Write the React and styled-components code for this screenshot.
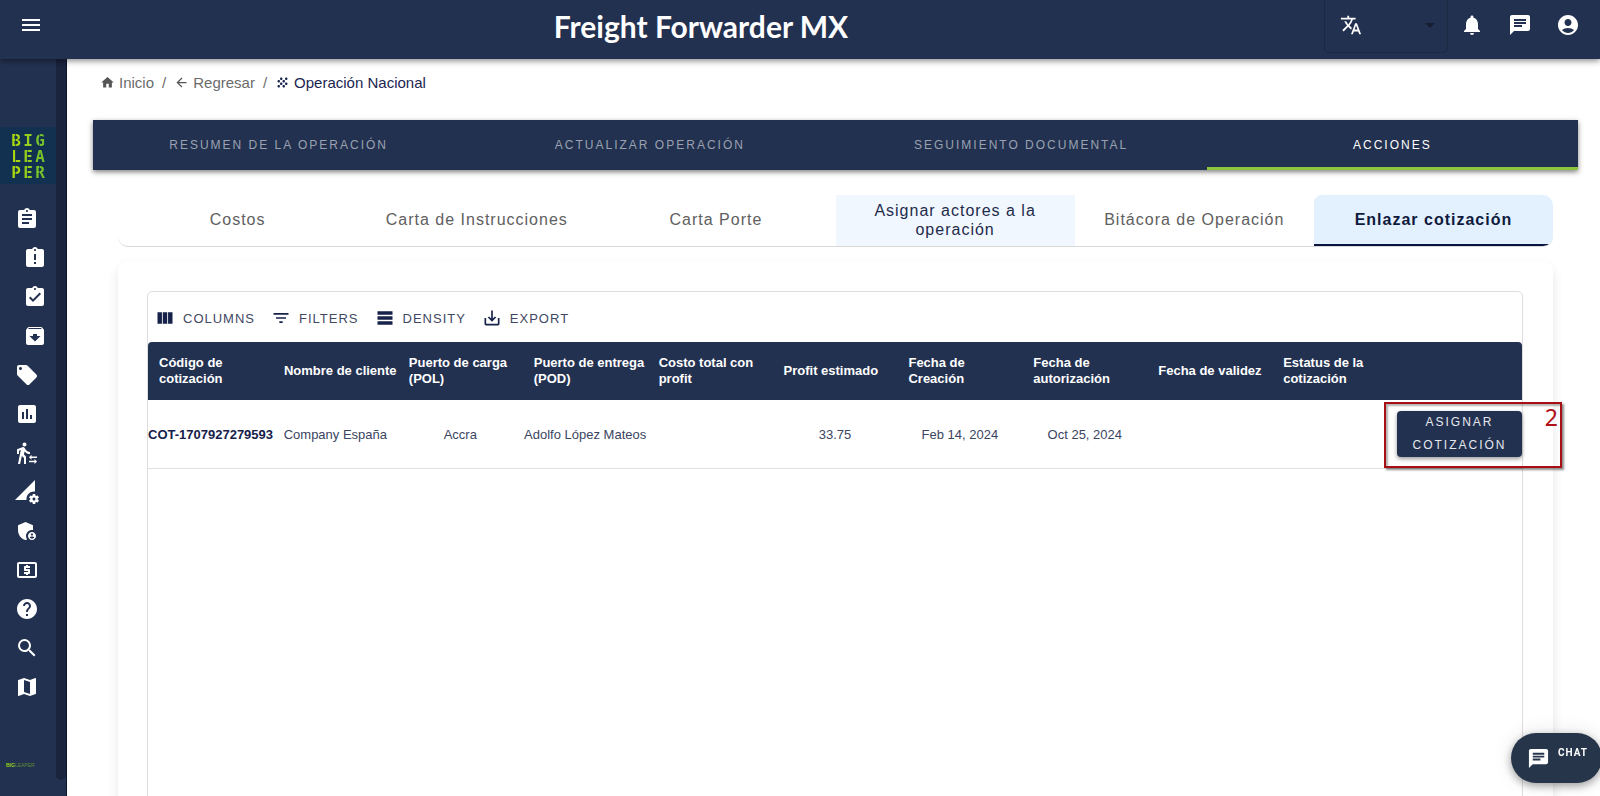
import styled, { createGlobalStyle, css } from "styled-components";
import {
  MdAccountCircle,
  MdAdminPanelSettings,
  MdArchive,
  MdArrowBack,
  MdArrowDropDown,
  MdAssessment,
  MdAssignment,
  MdAssignmentLate,
  MdAssignmentTurnedIn,
  MdChat,
  MdFilterList,
  MdGrain,
  MdHelp,
  MdHome,
  MdLocalAtm,
  MdLocalOffer,
  MdMap,
  MdMenu,
  MdNotifications,
  MdPermDataSetting,
  MdSaveAlt,
  MdSearch,
  MdTableRows,
  MdTransferWithinAStation,
  MdTranslate,
  MdViewColumn,
} from "react-icons/md";

const navy = "#233150";
const green = "#8cc63f";
const logoColors = ["#a9d80f", "#93cf1c", "#76c32b"];

const sideItems = [
  { label: "Operaciones", icon: MdAssignment },
  { label: "Pendientes", icon: MdAssignmentLate, nested: true },
  { label: "Completadas", icon: MdAssignmentTurnedIn, nested: true },
  { label: "Archivadas", icon: MdArchive, nested: true },
  { label: "Ofertas", icon: MdLocalOffer },
  { label: "Reportes", icon: MdAssessment },
  { label: "Traslados", icon: MdTransferWithinAStation },
  { label: "Datos", icon: MdPermDataSetting },
  { label: "Administración", icon: MdAdminPanelSettings },
  { label: "Pagos", icon: MdLocalAtm },
  { label: "Ayuda", icon: MdHelp },
  { label: "Buscar", icon: MdSearch },
  { label: "Mapa", icon: MdMap },
];

const tabs = [
  "Resumen de la operación",
  "Actualizar operación",
  "Seguimiento documental",
  "Acciones",
];

const subTabs = [
  "Costos",
  "Carta de Instrucciones",
  "Carta Porte",
  "Asignar actores a la operación",
  "Bitácora de Operación",
  "Enlazar cotización",
];

const tools = [
  { label: "Columns", icon: MdViewColumn },
  { label: "Filters", icon: MdFilterList },
  { label: "Density", icon: MdTableRows },
  { label: "Export", icon: MdSaveAlt },
];

const columns = [
  "Código de cotización",
  "Nombre de cliente",
  "Puerto de carga (POL)",
  "Puerto de entrega (POD)",
  "Costo total con profit",
  "Profit estimado",
  "Fecha de Creación",
  "Fecha de autorización",
  "Fecha de validez",
  "Estatus de la cotización",
];

const rows = [
  [
    "COT-1707927279593",
    "Company España",
    "Accra",
    "Adolfo López Mateos",
    "",
    "33.75",
    "Feb 14, 2024",
    "Oct 25, 2024",
    "",
    "",
  ],
];

export default function App() {
  return (
    <Page>
      <GlobalStyle />
      <Header>
        <MenuButton aria-label="Menú">
          <MdMenu />
        </MenuButton>
        <Title>Freight Forwarder MX</Title>
        <Language>
          <MdTranslate />
          <LanguageSelect aria-label="Idioma" defaultValue="">
            <option value=""></option>
            <option value="es">Español</option>
            <option value="en">English</option>
          </LanguageSelect>
          <MdArrowDropDown />
        </Language>
        <HeaderButtons>
          <HeaderButton aria-label="Notificaciones">
            <MdNotifications />
          </HeaderButton>
          <HeaderButton aria-label="Mensajes">
            <MdChat />
          </HeaderButton>
          <HeaderButton aria-label="Cuenta">
            <MdAccountCircle />
          </HeaderButton>
        </HeaderButtons>
      </Header>

      <Body>
        <Sidebar>
          <SideContent>
            <Logo href="#">
              {"BIGLEAPER".split("").map((letter, i) => (
                <Letter
                  key={i}
                  $color={logoColors[i % 3]}
                  $solid={letter === "I" || letter === "A"}
                >
                  {letter}
                </Letter>
              ))}
            </Logo>
            <SideNav>
              {sideItems.map(({ label, icon: Icon, nested }) => (
                <SideLink key={label} href="#" aria-label={label} $nested={nested}>
                  <Icon />
                </SideLink>
              ))}
            </SideNav>
            <Brand>
              <b>BIG</b>LEAPER
            </Brand>
          </SideContent>
          <ScrollTrack>
            <ScrollThumb />
          </ScrollTrack>
        </Sidebar>

        <Main>
          <Breadcrumbs aria-label="breadcrumb">
            <Crumb href="#">
              <MdHome />
              Inicio
            </Crumb>
            <span>/</span>
            <Crumb href="#">
              <MdArrowBack />
              Regresar
            </Crumb>
            <span>/</span>
            <Crumb href="#" $current>
              <MdGrain />
              Operación Nacional
            </Crumb>
          </Breadcrumbs>

          <Tabs role="tablist">
            {tabs.map((tab) => (
              <Tab
                key={tab}
                role="tab"
                aria-selected={tab === "Acciones"}
                $active={tab === "Acciones"}
              >
                {tab}
              </Tab>
            ))}
          </Tabs>

          <Panel>
            <SubTabs role="tablist">
              {subTabs.map((tab, i) => (
                <SubTab
                  key={tab}
                  role="tab"
                  aria-selected={i === 5}
                  $active={i === 5}
                  $hovered={i === 3}
                >
                  {tab}
                </SubTab>
              ))}
            </SubTabs>

            <Card>
              <Grid>
                <Toolbar>
                  {tools.map(({ label, icon: Icon }) => (
                    <ToolButton key={label}>
                      <Icon />
                      {label}
                    </ToolButton>
                  ))}
                </Toolbar>
                <Table>
                  <thead>
                    <tr>
                      {columns.map((column) => (
                        <Th key={column}>{column}</Th>
                      ))}
                      <Th aria-label="Acciones" />
                    </tr>
                  </thead>
                  <tbody>
                    {rows.map((row) => (
                      <tr key={row[0]}>
                        {row.map((value, i) => (
                          <Td key={i} $bold={i === 0}>
                            {value}
                          </Td>
                        ))}
                        <Td>
                          <AssignButton>Asignar cotización</AssignButton>
                          <Callout>2</Callout>
                        </Td>
                      </tr>
                    ))}
                  </tbody>
                </Table>
              </Grid>
            </Card>
          </Panel>
        </Main>
      </Body>

      <ChatButton>
        <MdChat />
        <ChatLabel>Chat</ChatLabel>
      </ChatButton>
    </Page>
  );
}

const GlobalStyle = createGlobalStyle`
  * {
    box-sizing: border-box;
  }
  body {
    margin: 0;
    background: #fff;
    font-family: "Liberation Sans", Arial, sans-serif;
  }
  button, select {
    font-family: inherit;
    border: 0;
    background: none;
    padding: 0;
    cursor: pointer;
  }
  a {
    text-decoration: none;
  }
`;

const Page = styled.div`
  height: 100vh;
  display: flex;
  flex-direction: column;
  overflow: hidden;
`;

const Header = styled.header`
  display: flex;
  align-items: flex-start;
  flex-shrink: 0;
  height: 59px;
  padding-right: 8px;
  background: ${navy};
  color: #fff;
  box-shadow: 0 2px 6px rgba(0, 0, 0, 0.45);
  z-index: 2;
`;

const MenuButton = styled.button`
  display: flex;
  align-items: center;
  width: 78px;
  height: 50px;
  padding-left: 19px;
  color: #fff;
  font-size: 24px;
`;

const Title = styled.h1`
  flex: 1;
  margin: 0;
  font-family: Lato, sans-serif;
  font-size: 30px;
  font-weight: 700;
  line-height: 52px;
  text-align: center;
`;

const Language = styled.label`
  display: flex;
  align-items: center;
  width: 124px;
  height: 53px;
  padding: 0 5px 2px 15px;
  border: 1px solid #1d2943;
  border-top: 0;
  border-radius: 0 0 5px 5px;
  font-size: 22px;

  svg:last-child {
    color: #151d30;
    font-size: 24px;
    pointer-events: none;
  }
`;

const LanguageSelect = styled.select`
  flex: 1;
  min-width: 0;
  height: 40px;
  appearance: none;
  color: #fff;
  outline: 0;
`;

const HeaderButtons = styled.div`
  display: flex;
`;

const HeaderButton = styled.button`
  display: flex;
  align-items: center;
  justify-content: center;
  width: 48px;
  height: 50px;
  color: #fff;
  font-size: 24px;
`;

const Body = styled.div`
  display: flex;
  flex: 1;
  min-height: 0;
`;

const Sidebar = styled.aside`
  display: flex;
  flex-shrink: 0;
  width: 67px;
  background: ${navy};
  border-right: 1px solid #0a1230;
`;

const SideContent = styled.div`
  display: flex;
  flex-direction: column;
  flex: 1;
  padding-top: 68px;
`;

const Logo = styled.a`
  display: grid;
  grid-template-columns: repeat(3, 12px);
  grid-auto-rows: 16px;
  justify-content: center;
  align-content: center;
  height: 57px;
  padding-top: 2px;
  background: #123050;
`;

/* stencil lettering: a dim gap runs through the fill of each letter */
const Letter = styled.span`
  font-family: "DejaVu Sans Mono", monospace;
  font-size: 16px;
  font-weight: 700;
  line-height: 16px;
  text-align: center;
  color: transparent;
  background: ${({ $solid, $color }) =>
    $solid
      ? $color
      : `linear-gradient(90deg, ${$color} 5px, ${$color}66 5px, ${$color}66 6px, ${$color} 6px)`};
  background-clip: text;
`;

const SideNav = styled.nav`
  display: flex;
  flex-direction: column;
  padding-top: 15px;
`;

const SideLink = styled.a`
  display: flex;
  align-items: center;
  height: 39px;
  padding-left: ${({ $nested }) => ($nested ? "23px" : "15px")};
  color: #fff;
  font-size: 24px;
`;

const Brand = styled.small`
  margin: 56px 0 0 6px;
  color: #5d8a35;
  font-size: 5px;
  line-height: 6px;

  b {
    color: #93cf1c;
  }
`;

const ScrollTrack = styled.div`
  width: 10px;
  padding-bottom: 16px;
`;

const ScrollThumb = styled.div`
  height: 100%;
  border-radius: 0 0 5px 5px;
  background: #1b243d;
`;

const Main = styled.main`
  flex: 1;
  min-width: 0;
  padding: 11px 22px 0 26px;
`;

const Breadcrumbs = styled.nav`
  display: flex;
  align-items: center;
  gap: 8px;
  height: 24px;
  padding-left: 7px;
  color: #6b6b6b;
  font-size: 15px;
`;

const Crumb = styled.a`
  display: flex;
  align-items: center;
  gap: 4px;
  color: ${({ $current }) => ($current ? "#1b2550" : "#6b6b6b")};

  svg {
    font-size: 15px;
    color: ${({ $current }) => ($current ? "#1b2550" : "#555")};
  }
`;

const Tabs = styled.div`
  display: flex;
  margin-top: 26px;
  background: ${navy};
  box-shadow: 0 2px 5px rgba(0, 0, 0, 0.5);
`;

const Tab = styled.button`
  flex: 1;
  height: 50px;
  box-shadow: ${({ $active }) => ($active ? `inset 0 -3px ${green}` : "none")};
  color: ${({ $active }) => ($active ? "#fff" : "#9aa2b1")};
  font-size: 12px;
  letter-spacing: 2px;
  text-transform: uppercase;
`;

const Panel = styled.section`
  padding: 25px 25px 0;
`;

const SubTabs = styled.div`
  display: flex;
  height: 52px;
  border-bottom: 1px solid #d8d8d8;
  border-radius: 10px;
  overflow: hidden;
`;

const SubTab = styled.button`
  flex: 1 1 0;
  padding: 0 24px 2px;
  color: #606060;
  font-size: 16px;
  line-height: 19px;
  letter-spacing: 1px;

  ${({ $hovered }) =>
    $hovered &&
    css`
      background: #f0f7ff;
      color: #1f2b4a;
    `}

  ${({ $active }) =>
    $active &&
    css`
      background: #e3f1ff;
      box-shadow: inset 0 -2px #0a1440;
      border-radius: 8px 8px 0 0;
      color: #0f1a3c;
      font-weight: 700;
    `}
`;

const Card = styled.div`
  margin-top: 14px;
  padding: 30px 30px 30px 29px;
  border-radius: 10px;
  box-shadow: 0 6px 12px rgba(0, 0, 0, 0.1);
`;

const Grid = styled.div`
  min-height: 640px;
  border: 1px solid #dedede;
  border-radius: 5px;
`;

const Toolbar = styled.div`
  display: flex;
  align-items: center;
  gap: 16px;
  height: 50px;
  padding: 2px 7px 0;
`;

const ToolButton = styled.button`
  display: flex;
  align-items: center;
  gap: 8px;
  color: #3f4863;
  font-size: 13px;
  letter-spacing: 1px;
  text-transform: uppercase;

  svg {
    color: #17224a;
    font-size: 20px;
  }
`;

const Table = styled.table`
  width: 100%;
  border-collapse: separate;
  border-spacing: 0;
  table-layout: fixed;
  font-size: 13px;
`;

const Th = styled.th`
  height: 58px;
  padding: 0 0 0 11px;
  background: ${navy};
  color: #fff;
  line-height: 16px;
  text-align: left;

  &:first-child {
    border-top-left-radius: 4px;
  }
  &:last-child {
    border-top-right-radius: 4px;
  }
`;

const Td = styled.td`
  position: relative;
  height: 69px;
  padding: 0;
  border-bottom: 1px solid #e0e0e0;
  color: ${({ $bold }) => ($bold ? "#16204a" : "#3b4462")};
  font-weight: ${({ $bold }) => ($bold ? 700 : 400)};
  text-align: center;
  white-space: nowrap;
`;

const AssignButton = styled.button`
  width: 100%;
  height: 46px;
  padding: 0 12px;
  border-radius: 4px;
  background: ${navy};
  box-shadow: 0 2px 4px rgba(0, 0, 0, 0.4);
  color: #e6e8ee;
  font-size: 12px;
  line-height: 23px;
  letter-spacing: 2px;
  text-transform: uppercase;
  white-space: normal;
`;

const Callout = styled.div`
  position: absolute;
  top: 2px;
  right: -40px;
  bottom: 0;
  left: -13px;
  padding-right: 2px;
  border: 2px solid #a80f14;
  box-shadow: 2px 2px 2px rgba(0, 0, 0, 0.45), inset 2px 2px 2px rgba(0, 0, 0, 0.3);
  color: #b01116;
  font-family: "Noto Sans", sans-serif;
  font-size: 23px;
  line-height: 26px;
  text-align: right;
  pointer-events: none;
`;

const ChatButton = styled.button`
  position: fixed;
  right: -2px;
  bottom: 13px;
  display: flex;
  align-items: center;
  gap: 8px;
  width: 91px;
  height: 50px;
  padding: 0 0 0 16px;
  border-radius: 25px;
  background: #26354a;
  box-shadow: 0 3px 8px rgba(0, 0, 0, 0.35), 0 0 20px rgba(0, 0, 0, 0.1);
  color: #fff;
  z-index: 3;

  svg {
    font-size: 23px;
  }
`;

const ChatLabel = styled.span`
  padding-bottom: 11px;
  font-family: Roboto, sans-serif;
  font-size: 10px;
  font-weight: 700;
  line-height: 12px;
  letter-spacing: 1px;
  text-transform: uppercase;
`;
